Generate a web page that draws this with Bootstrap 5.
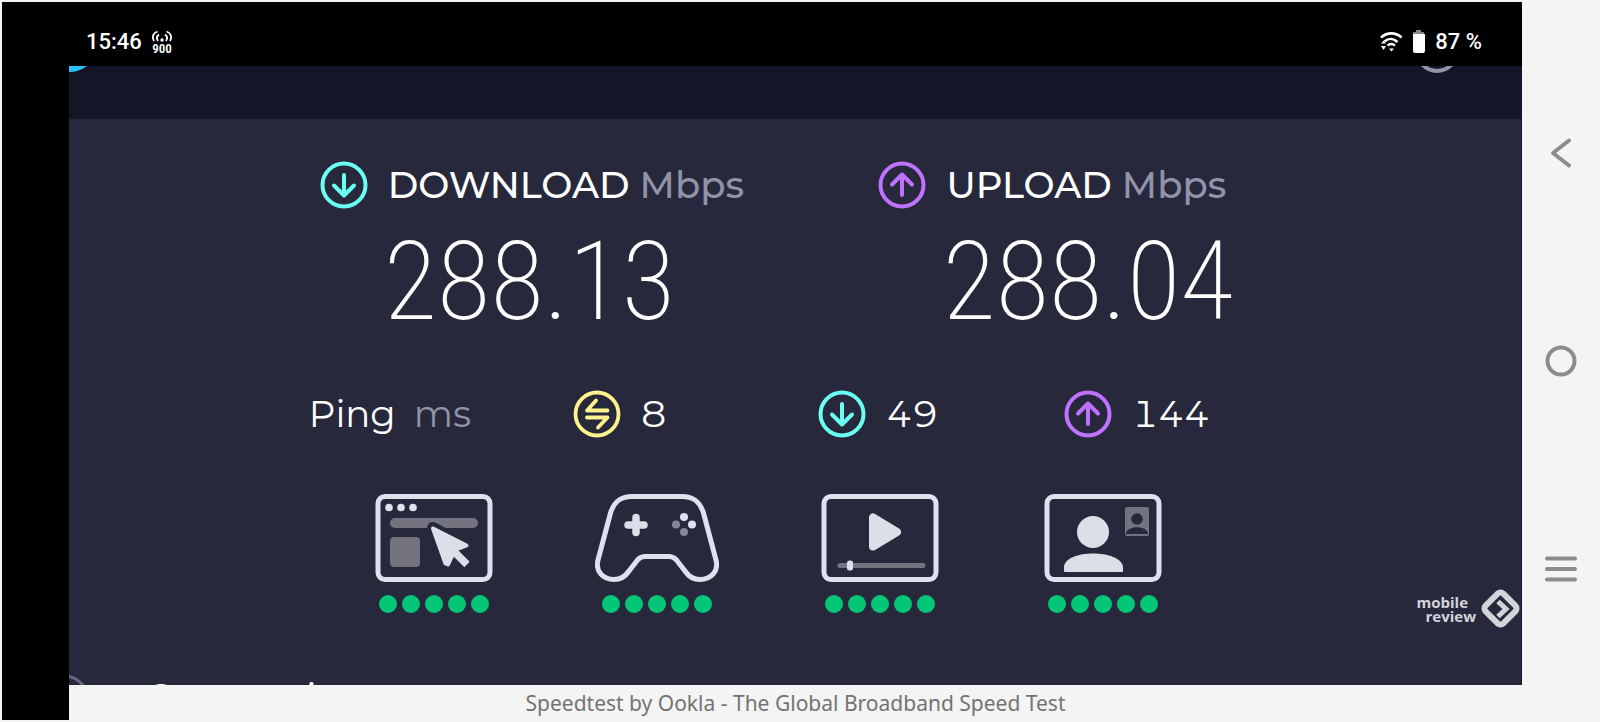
<!DOCTYPE html>
<html lang="en">
<head>
<meta charset="utf-8">
<meta name="viewport" content="width=device-width, initial-scale=1">
<title>Speedtest by Ookla</title>
<link href="https://cdn.jsdelivr.net/npm/bootstrap@5.3.0/dist/css/bootstrap.min.css" rel="stylesheet">
<script src="https://cdn.jsdelivr.net/npm/bootstrap@5.3.0/dist/js/bootstrap.bundle.min.js"></script>
<style>
  body { background: #f4f4f4; font-family: Montserrat, Inter, sans-serif; color: #fff; }
  .device { padding: 2px 0 2px 2px; }
  .phone-side { width: 67px; background: #000; }
  .statusbar { height: 64px; padding: 26px 40px 0 17px; background: #000; font: 500 22px/28px Roboto, sans-serif; }
  .topbar { height: 53px; background: #141526; }
  .panel { background: #27283c; border-right: 1px solid #141526; }
  .unit { color: #9193a8; }
  .dl { color: #6afff3; }
  .ul { color: #bf71ff; }
  .pg { color: #fff38e; }
  .speeds { display: grid; grid-template-columns: 251fr 559fr 643fr; padding-top: 40px; }
  .speeds > :first-child { grid-column-start: 2; }
  .speeds h2 { font-size: 37px; line-height: 52px; font-weight: 500; gap: 20px; margin: 0; }
  .reading { font: 200 110px/142px "Roboto Condensed", Roboto, sans-serif; padding-left: 64px; }
  .pings { display: grid; grid-template-columns: 240fr 264fr 246fr 246fr 457fr; margin-top: 36px; font-size: 37px; line-height: 50px; font-weight: 400; font-variant-numeric: tabular-nums; }
  .pings > :first-child { grid-column-start: 2; }
  .pings > div { gap: 20px; }
  .pings > .ping-label { gap: 18px; }
  .uses { display: grid; grid-template-columns: 254fr 223fr 223fr 223fr 223fr 307fr; margin-top: 54px; }
  .uses > :first-child { grid-column-start: 2; }
  .dots { gap: 5px; margin-top: 12px; }
  .dots i { width: 18px; height: 18px; border-radius: 50%; background: #04c677; }
  .next { margin-top: 60px; gap: 60px; font-size: 38px; line-height: 48px; }
  .brand { right: 0; bottom: 55px; gap: 4px; font: 700 15px/14px "Open Sans", sans-serif; color: #d3d4da; }
  .caption { height: 35px; font: 400 21px/36px "Noto Sans", sans-serif; color: #737373; }
  .sysnav { width: 78px; }
  .sysnav button { color: #8c8c8c; width: 48px; height: 114px; }
  svg { display: block; flex: none; }
  .clipped-top { left: 0; top: 0; }
  .clipped-end { right: 68px; top: 0; }
</style>
</head>
<body>
<svg width="0" height="0" class="position-absolute" aria-hidden="true">
  <symbol id="down" viewBox="0 0 48 48"><g fill="none" stroke="currentColor" stroke-width="4" stroke-linecap="round" stroke-linejoin="round"><circle cx="24" cy="24" r="21.500"/><path d="M24 14V34M14 24.500l10 10 10-10"/></g></symbol>
  <symbol id="up" viewBox="0 0 48 48"><g fill="none" stroke="currentColor" stroke-width="4" stroke-linecap="round" stroke-linejoin="round"><circle cx="24" cy="24" r="21.500"/><path d="M24 34V14M14 23.500l10-10 10 10"/></g></symbol>
  <symbol id="swap" viewBox="0 0 48 48"><g fill="none" stroke="currentColor" stroke-width="3.800" stroke-linecap="round" stroke-linejoin="round"><circle cx="24" cy="24" r="21.500"/><path d="M34.500 20.500H14l9-10M14 27.500h20.500l-9.500 10"/></g></symbol>
</svg>

<div class="device d-flex vh-100 overflow-hidden">
  <div class="phone-side flex-shrink-0"></div>
  <main class="flex-grow-1 d-flex flex-column overflow-hidden">
    <header class="statusbar d-flex justify-content-between align-items-start flex-shrink-0">
      <div class="d-flex align-items-center">
        <span>15:46</span>
        <svg class="ms-2" width="24" height="28" viewBox="0 0 24 28" role="img" aria-label="900 MHz">
          <g fill="none" stroke="#fff" stroke-width="1.800"><path d="M4 13C1.500 9 3 5 7.500 3.500M8 13c-1.800-2.500-1-5 1-6.500M20 13c2.500-4 1-8-3.500-9.500M16 13c1.800-2.500 1-5-1-6.500"/></g>
          <circle cx="12" cy="12" r="1.700" fill="#fff"/>
          <text x="12" y="25" text-anchor="middle" font-family="Roboto Condensed" font-weight="600" font-size="13" fill="#fff">900</text>
        </svg>
      </div>
      <div class="d-flex align-items-center">
        <svg width="24" height="24" viewBox="0 0 24 24" role="img" aria-label="Wi-Fi">
          <g fill="none" stroke="#fff" stroke-width="2.600"><path d="M2 7.500C8 2 17 2 22.500 7.500M5.500 11.500c4-3.500 9-3.500 13 .500M8.500 15.500c2.500-2 5-2 7.500 0"/></g>
          <path d="M10 18.500h5L12.500 21.500zM2 13.500h5L4.500 10.500zM2 16h5L4.500 20z" fill="#fff"/>
        </svg>
        <svg class="ms-2 me-1" width="16" height="24" viewBox="0 0 16 24" role="img" aria-label="Battery"><path d="M2 5V3q0-1 1-1h2V0h5v2h2q1 0 1 1v2z" fill="#888"/><path d="M2 4h12v17q0 2-2 2H4q-2 0-2-2z" fill="#fff"/></svg>
        <span class="ms-1">87 %</span>
      </div>
    </header>

    <div class="topbar position-relative flex-shrink-0">
      <svg class="position-absolute clipped-top" width="20" height="8" viewBox="0 0 20 8"><path d="M0 0h18Q10 6 0 6z" fill="#28c1fb"/></svg>
      <svg class="position-absolute clipped-end" width="34" height="8" viewBox="0 0 34 8"><circle cx="17" cy="-15" r="20" fill="none" stroke="#9193a8" stroke-width="4"/></svg>
    </div>

    <section class="panel position-relative flex-grow-1 overflow-hidden">
      <div class="speeds">
        <div>
          <h2 class="d-flex align-items-center"><svg class="dl" width="48" height="48"><use href="#down"/></svg><span>DOWNLOAD <span class="unit">Mbps</span></span></h2>
          <div class="reading">288.13</div>
        </div>
        <div>
          <h2 class="d-flex align-items-center"><svg class="ul" width="48" height="48"><use href="#up"/></svg><span>UPLOAD <span class="unit">Mbps</span></span></h2>
          <div class="reading">288.04</div>
        </div>
      </div>

      <div class="pings">
        <div class="d-flex align-items-center ping-label">Ping <span class="unit">ms</span></div>
        <div class="d-flex align-items-center"><svg class="pg" width="48" height="48"><use href="#swap"/></svg>8</div>
        <div class="d-flex align-items-center"><svg class="dl" width="48" height="48"><use href="#down"/></svg>49</div>
        <div class="d-flex align-items-center"><svg class="ul" width="48" height="48"><use href="#up"/></svg>144</div>
      </div>

      <div class="uses">
        <div class="d-flex flex-column align-items-center">
          <svg width="124" height="90" viewBox="0 0 124 90" role="img" aria-label="Web browsing">
            <rect x="6" y="3.500" width="112" height="83" rx="7" fill="none" stroke="#dfe1ec" stroke-width="5"/>
            <g fill="#dfe1ec"><circle cx="17" cy="14.500" r="3.800"/><circle cx="29" cy="14.500" r="3.800"/><circle cx="41" cy="14.500" r="3.800"/></g>
            <g fill="#72737f"><rect x="18" y="25" width="88" height="10" rx="5"/><rect x="18" y="44" width="30" height="30" rx="4"/></g>
            <path d="M61 35 80 45 70 60z" fill="#27283c" stroke="#27283c" stroke-width="12" stroke-linejoin="round"/>
            <path d="M61 35.500 94.500 52.500 83 57 76 71.500 73.500 70.500z" fill="#dcdee8" stroke="#dcdee8" stroke-width="4" stroke-linejoin="round"/>
            <path d="M79 55.500 95 71.500" stroke="#dcdee8" stroke-width="7.500"/>
          </svg>
          <div class="dots d-flex"><i></i><i></i><i></i><i></i><i></i></div>
        </div>
        <div class="d-flex flex-column align-items-center">
          <svg width="124" height="90" viewBox="0 0 124 90" role="img" aria-label="Gaming">
            <path d="M37 3.500H87C99 3.500 105 9 108.500 20L121 67C124 78 116 86.500 105 86.500 98 86.500 94 84 90 78L81 66.500Q78 63.500 74 63.500H50Q46 63.500 43 66.500L34 78C30 84 26 86.500 19 86.500 8 86.500 0 78 3 67L15.500 20C19 9 25 3.500 37 3.500z" fill="none" stroke="#dfe1ec" stroke-width="5"/>
            <path d="M41 24.500v15M33 32h16" stroke="#dcdee8" stroke-width="7.500" stroke-linecap="round"/>
            <g fill="#dfe1ec"><circle cx="89" cy="24" r="4"/><circle cx="97" cy="31.500" r="4"/></g><g fill="#858693"><circle cx="81" cy="31.500" r="4"/><circle cx="89" cy="39" r="4"/></g>
          </svg>
          <div class="dots d-flex"><i></i><i></i><i></i><i></i><i></i></div>
        </div>
        <div class="d-flex flex-column align-items-center">
          <svg width="124" height="90" viewBox="0 0 124 90" role="img" aria-label="Video streaming">
            <rect x="6" y="3.500" width="112" height="83" rx="7" fill="none" stroke="#dfe1ec" stroke-width="5"/>
            <path d="M55 24.500v29L79 39z" fill="#dcdee8" stroke="#dcdee8" stroke-width="8" stroke-linejoin="round"/>
            <path d="M22 72.500h83" stroke="#72737f" stroke-width="5" stroke-linecap="round"/><rect x="29" y="67.500" width="6" height="10" rx="2.500" fill="#dfe1ec"/>
          </svg>
          <div class="dots d-flex"><i></i><i></i><i></i><i></i><i></i></div>
        </div>
        <div class="d-flex flex-column align-items-center">
          <svg width="124" height="90" viewBox="0 0 124 90" role="img" aria-label="Video calls">
            <rect x="6" y="3.500" width="112" height="83" rx="7" fill="none" stroke="#dfe1ec" stroke-width="5"/>
            <g fill="#dcdee8"><circle cx="52" cy="39" r="16"/><path d="M23 78v-4C24 56 80 56 82 74v4q0 1-1 1H24q-1 0-1-1z"/></g>
            <rect x="84" y="14" width="24" height="29" rx="2" fill="#72737f"/><g fill="#27283c"><circle cx="96" cy="26" r="5.800"/><path d="M85 41c0-9 22-9 22 0z"/></g>
          </svg>
          <div class="dots d-flex"><i></i><i></i><i></i><i></i><i></i></div>
        </div>
      </div>

      <div class="next d-flex">
        <svg width="16" height="48" viewBox="0 0 16 48"><circle cx="-5" cy="27" r="24" fill="none" stroke="#666881" stroke-width="3"/></svg>
        <span>Connections</span>
      </div>

      <div class="brand position-absolute d-flex align-items-center">
        <div class="text-end"><div class="pe-2">mobile</div><div>review</div></div>
        <svg width="41" height="42" viewBox="0 0 41 42" aria-hidden="true"><rect x="8" y="8" width="25" height="25" rx="4" transform="rotate(45 20.500 20.500)" fill="none" stroke="currentColor" stroke-width="6"/><path d="M18 13.500l8 7.500-8 7.500" fill="none" stroke="currentColor" stroke-width="5"/></svg>
      </div>
    </section>
    <footer class="caption text-center flex-shrink-0">Speedtest by Ookla - The Global Broadband Speed Test</footer>
  </main>

  <nav class="sysnav flex-shrink-0 d-flex flex-column justify-content-evenly align-items-center" aria-label="System">
    <button class="btn p-0 border-0 d-flex align-items-center justify-content-center" aria-label="Back"><svg width="32" height="32" viewBox="0 0 32 32"><path d="M24 3.500 8 16l16 12.500" fill="none" stroke="currentColor" stroke-width="4" stroke-linecap="round" stroke-linejoin="round"/></svg></button>
    <button class="btn p-0 border-0 d-flex align-items-center justify-content-center" aria-label="Home"><svg width="32" height="32" viewBox="0 0 32 32"><circle cx="16" cy="16" r="13.500" fill="none" stroke="currentColor" stroke-width="4"/></svg></button>
    <button class="btn p-0 border-0 d-flex align-items-center justify-content-center" aria-label="Recent apps"><svg width="34" height="32" viewBox="0 0 34 32"><path d="M3 5.500h28M3 16h28M3 26.500h28" stroke="currentColor" stroke-width="4" stroke-linecap="round"/></svg></button>
  </nav>
</div>
</body>
</html>
